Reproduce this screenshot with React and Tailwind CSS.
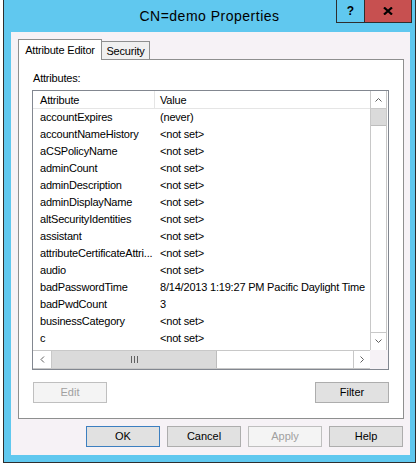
import React from "react";

const rows = [
  ["accountExpires", "(never)"],
  ["accountNameHistory", "<not set>"],
  ["aCSPolicyName", "<not set>"],
  ["adminCount", "<not set>"],
  ["adminDescription", "<not set>"],
  ["adminDisplayName", "<not set>"],
  ["altSecurityIdentities", "<not set>"],
  ["assistant", "<not set>"],
  ["attributeCertificateAttri...", "<not set>"],
  ["audio", "<not set>"],
  ["badPasswordTime", "8/14/2013 1:19:27 PM Pacific Daylight Time"],
  ["badPwdCount", "3"],
  ["businessCategory", "<not set>"],
  ["c", "<not set>"],
];

// small scroll arrow chevrons
function Chevron({ dir }) {
  const pts = {
    up: "0.5,4.5 3.5,1.5 6.5,4.5",
    down: "0.5,0.5 3.5,3.5 6.5,0.5",
    left: "4,0.5 1,3.5 4,6.5",
    right: "0.5,0.5 3.5,3.5 0.5,6.5",
  }[dir];
  const vertical = dir === "up" || dir === "down";
  return (
    <svg
      width={vertical ? 7 : 5}
      height={vertical ? 5 : 7}
      viewBox={vertical ? "0 0 7 5" : "0 0 5 7"}
    >
      <polyline points={pts} fill="none" stroke="#606060" strokeWidth="1" />
    </svg>
  );
}

function Button({ children, primary, disabled }) {
  let cls = "border-[#adadad] bg-[#e1e1e1] text-black";
  if (primary) cls = "border-[#3c7fc0] bg-[#e1e1e1] text-black";
  if (disabled) cls = "border-[#bfbfbf] bg-[#f4f4f4] text-[#a0a0a0]";
  return (
    <div
      className={`w-[74px] h-[21px] border flex items-center justify-center text-[11px] leading-[13px] ${cls}`}
    >
      {children}
    </div>
  );
}

export default function App() {
  return (
    <div className="w-[417px] h-[464px] bg-white font-['Liberation_Sans',Arial,sans-serif] text-black overflow-hidden">
      <div className="ml-[3px] w-[413px] h-[463px] bg-[#60c8ef] border-x border-b border-[#2e2e2e] flex flex-col">
        {/* title bar */}
        <div className="h-[32px] grid grid-cols-[1fr_auto_1fr] items-start">
          <div />
          <div className="pt-[6px] text-[14px] leading-[20px] tracking-[0.5px] whitespace-nowrap">
            CN=demo Properties
          </div>
          <div className="flex justify-end pr-[3px]">
            <div className="flex h-[23px] border-x border-b border-[#2e2e2e]">
              <div className="w-[28px] border-r border-[#2e2e2e] flex items-center justify-center text-[12px] font-bold leading-none pb-px">
                ?
              </div>
              <div className="w-[46px] bg-[#c75050] flex items-center justify-center pb-px">
                <svg width="10" height="8" viewBox="0 0 10 8">
                  <path d="M1 0.5 L9 7.5 M9 0.5 L1 7.5" stroke="#000" strokeWidth="2.2" />
                </svg>
              </div>
            </div>
          </div>
        </div>

        {/* client area */}
        <div className="ml-[7px] w-[399px] h-[423px] bg-[#f6f2f6] flex flex-col pt-[7px]">
          {/* tabs */}
          <div className="flex items-end pl-[7px] -mb-px">
            <div className="relative z-10 w-[84px] h-[21px] bg-white border-t border-x border-[#8e8f8f] flex items-center justify-center text-[11px] leading-[13px] tracking-[-0.2px]">
              Attribute Editor
            </div>
            <div className="w-[48px] h-[18px] mb-px bg-[#f0f0f0] border-t border-r border-[#8e8f8f] flex items-center justify-center pt-[2px] text-[11px] leading-[13px] tracking-[-0.2px]">
              Security
            </div>
          </div>

          {/* tab panel */}
          <div className="ml-[7px] w-[386px] h-[360px] bg-white border border-[#8e8f8f] flex flex-col">
            <div className="mt-[12px] ml-[14px] h-[13px] text-[11px] leading-[13px] tracking-[-0.2px]">
              Attributes:
            </div>

            {/* list view */}
            <div className="mt-[5px] ml-[13px] w-[357px] h-[280px] border border-[#828790] grid grid-cols-[337px_18px] grid-rows-[259px_19px] text-[11px] tracking-[-0.2px]">
              <div className="overflow-hidden">
                <div className="h-[18px] border-b border-[#e5e5e5] flex">
                  <div className="w-[122px] border-r border-[#e5e5e5] pl-[7px] pt-[3px] leading-[13px]">
                    Attribute
                  </div>
                  <div className="pl-[5px] pt-[3px] leading-[13px]">Value</div>
                </div>
                {rows.map(([name, value]) => (
                  <div key={name} className="h-[17px] flex leading-[17px] whitespace-nowrap">
                    <div className="w-[122px] pl-[7px] overflow-hidden">{name}</div>
                    <div className="pl-[5px]">{value}</div>
                  </div>
                ))}
              </div>

              {/* vertical scrollbar */}
              <div className="w-[17px] flex flex-col border-x border-[#c8c8c8] bg-white">
                <div className="h-[18px] border-b border-[#c8c8c8] flex items-center justify-center">
                  <Chevron dir="up" />
                </div>
                <div className="h-[17px] bg-[#dadada] border-b border-[#bdbdbd]" />
                <div className="flex-1" />
                <div className="h-[18px] border-t border-[#c8c8c8] flex items-center justify-center">
                  <Chevron dir="down" />
                </div>
              </div>

              {/* horizontal scrollbar */}
              <div className="flex border-t border-b border-[#c8c8c8] bg-white">
                <div className="w-[19px] border-r border-[#c8c8c8] flex items-center justify-center">
                  <Chevron dir="left" />
                </div>
                <div className="w-[165px] bg-[#dadada] border-r border-[#bdbdbd] flex items-center justify-center gap-[2px]">
                  <div className="w-px h-[7px] bg-[#606060]" />
                  <div className="w-px h-[7px] bg-[#606060]" />
                  <div className="w-px h-[7px] bg-[#606060]" />
                </div>
                <div className="flex-1" />
                <div className="w-[17px] border-l border-[#c8c8c8] flex items-center justify-center">
                  <Chevron dir="right" />
                </div>
              </div>
              <div className="bg-[#f6f2f6]" />
            </div>

            {/* edit / filter */}
            <div className="mt-[12px] ml-[14px] w-[356px] flex justify-between">
              <Button disabled>Edit</Button>
              <Button>Filter</Button>
            </div>
          </div>

          {/* dialog buttons */}
          <div className="mt-[7px] flex justify-end gap-[7px] pr-[7px]">
            <Button primary>OK</Button>
            <Button>Cancel</Button>
            <Button disabled>Apply</Button>
            <Button>Help</Button>
          </div>
        </div>
      </div>
    </div>
  );
}
